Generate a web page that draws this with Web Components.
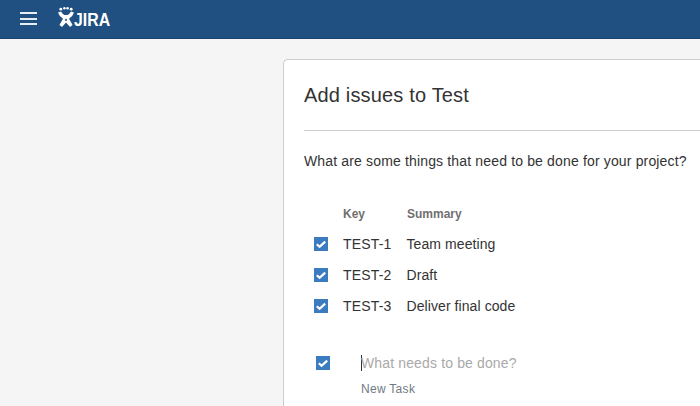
<!DOCTYPE html>
<html>
<head>
<meta charset="utf-8">
<style>
  html, body { margin:0; padding:0; height:100%; overflow:hidden; background:#f5f5f5; font-family:"Liberation Sans", Arial, sans-serif; color:#333; }
</style>
</head>
<body>
<app-header></app-header>
<issue-card heading="Add issues to Test" prompt="What are some things that need to be done for your project?">
  <issue-row key="TEST-1" summary="Team meeting"></issue-row>
  <issue-row key="TEST-2" summary="Draft"></issue-row>
  <issue-row key="TEST-3" summary="Deliver final code"></issue-row>
  <new-issue slot="new"></new-issue>
</issue-card>

<script>
const CHECK = `<svg width="14" height="14" viewBox="0 0 14 14" style="display:block"><rect width="14" height="14" fill="#3b7bbf"/><path d="M2.8 7.2 L5.6 9.8 L11.2 4.6" fill="none" stroke="#fff" stroke-width="2.2"/></svg>`;

class AppHeader extends HTMLElement {
  constructor() {
    super();
    this.attachShadow({ mode: "open" });
    this.shadowRoot.innerHTML = `
      <style>
        :host { display:flex; align-items:flex-start; height:38px; background:#205081; border-bottom:1px solid #1c4671; padding-left:20px; gap:21px; }
        .burger { width:17px; height:13px; display:flex; flex-direction:column; justify-content:space-between; margin-top:12px; }
        .burger i { display:block; height:2px; background:#e8edf3; }
        .logo { display:flex; align-items:flex-start; margin-top:7px; }
        .logo svg { display:block; }
        .word { color:#fff; font:bold 18px/18px "Liberation Sans", Arial, sans-serif; width:36px; margin-top:4px; transform:scaleX(.88); transform-origin:left; }
      </style>
      <div class="burger"><i></i><i></i><i></i></div>
      <div class="logo">
        <svg width="16" height="20" viewBox="0 0 16 20">
          <g fill="#fff">
            <circle cx="2.8" cy="2.2" r="1.4"/><circle cx="6.4" cy="1.3" r="1.3"/><circle cx="9.6" cy="1.3" r="1.3"/><circle cx="13.2" cy="2.2" r="1.4"/>
          </g>
          <path fill="#fff" fill-rule="evenodd" d="M0 5.4 L3 4.4 Q5 8 8 8 Q11 8 13 4.4 L16 5.4 Q14.6 9.6 11 11.8 L14.6 18 L12 20 L8 15.6 L4 20 L1.4 18 L5 11.8 Q1.4 9.6 0 5.4 Z M8 11.4 L6.8 13 L8 14.2 L9.2 13 Z"/>
        </svg>
        <span class="word">JIRA</span>
      </div>`;
  }
}

class IssueCard extends HTMLElement {
  constructor() {
    super();
    this.attachShadow({ mode: "open" });
  }
  connectedCallback() {
    this.shadowRoot.innerHTML = `
      <style>
        :host { display:block; margin:20px 0 0 283px; background:#fff; border:1px solid #ccc; border-right:0; border-bottom:0; border-radius:5px 0 0 0; padding:0 0 0 20px; height:360px; box-sizing:border-box; }
        h1 { margin:0; padding-top:24px; height:46px; font:400 20px/22px "Liberation Sans", Arial, sans-serif; letter-spacing:.17px; color:#333; }
        hr { margin:0; border:0; border-top:1px solid #ccc; }
        p { margin:0; padding-top:20px; height:55px; font:14px/20px "Liberation Sans", Arial, sans-serif; letter-spacing:.155px; color:#333; }
        .head { display:flex; font:bold 12px/16px "Liberation Sans", Arial, sans-serif; color:#707070; padding-left:39px; height:18px; }
        .head span:first-child { width:64px; }
        .rows { display:flex; flex-direction:column; margin-top:4px; }
        .new { margin-top:34px; }
      </style>
      <h1>${this.getAttribute("heading")}</h1>
      <hr>
      <p>${this.getAttribute("prompt")}</p>
      <div class="head"><span>Key</span><span>Summary</span></div>
      <div class="rows"><slot></slot></div>
      <div class="new"><slot name="new"></slot></div>`;
  }
}

class IssueRow extends HTMLElement {
  constructor() {
    super();
    this.attachShadow({ mode: "open" });
  }
  connectedCallback() {
    this.shadowRoot.innerHTML = `
      <style>
        :host { display:flex; align-items:center; height:31px; padding-left:10px; font:14px/20px "Liberation Sans", Arial, sans-serif; color:#333; }
        .box { width:14px; margin-right:15px; }
        .key { width:63.5px; letter-spacing:.16px; }
        .summary { letter-spacing:.08px; }
      </style>
      <div class="box">${CHECK}</div>
      <span class="key">${this.getAttribute("key")}</span>
      <span class="summary">${this.getAttribute("summary")}</span>`;
  }
}

class NewIssue extends HTMLElement {
  constructor() {
    super();
    this.attachShadow({ mode: "open" });
    this.shadowRoot.innerHTML = `
      <style>
        :host { display:grid; grid-template-columns:14px auto; column-gap:31px; padding-left:12px; font-family:"Liberation Sans", Arial, sans-serif; }
        .box { align-self:center; }
        .input { font:14px/16px "Liberation Sans", Arial, sans-serif; letter-spacing:.14px; color:#a9a9a9; border-left:1px solid #333; height:16px; text-indent:-1px; }
        .type { grid-column:2; font-size:12px; line-height:16px; color:#707a84; margin-top:10px; letter-spacing:.3px; }
      </style>
      <div class="box">${CHECK}</div>
      <div class="input">What needs to be done?</div>
      <div class="type">New Task</div>`;
  }
}

customElements.define("app-header", AppHeader);
customElements.define("issue-card", IssueCard);
customElements.define("issue-row", IssueRow);
customElements.define("new-issue", NewIssue);
</script>
</body>
</html>
